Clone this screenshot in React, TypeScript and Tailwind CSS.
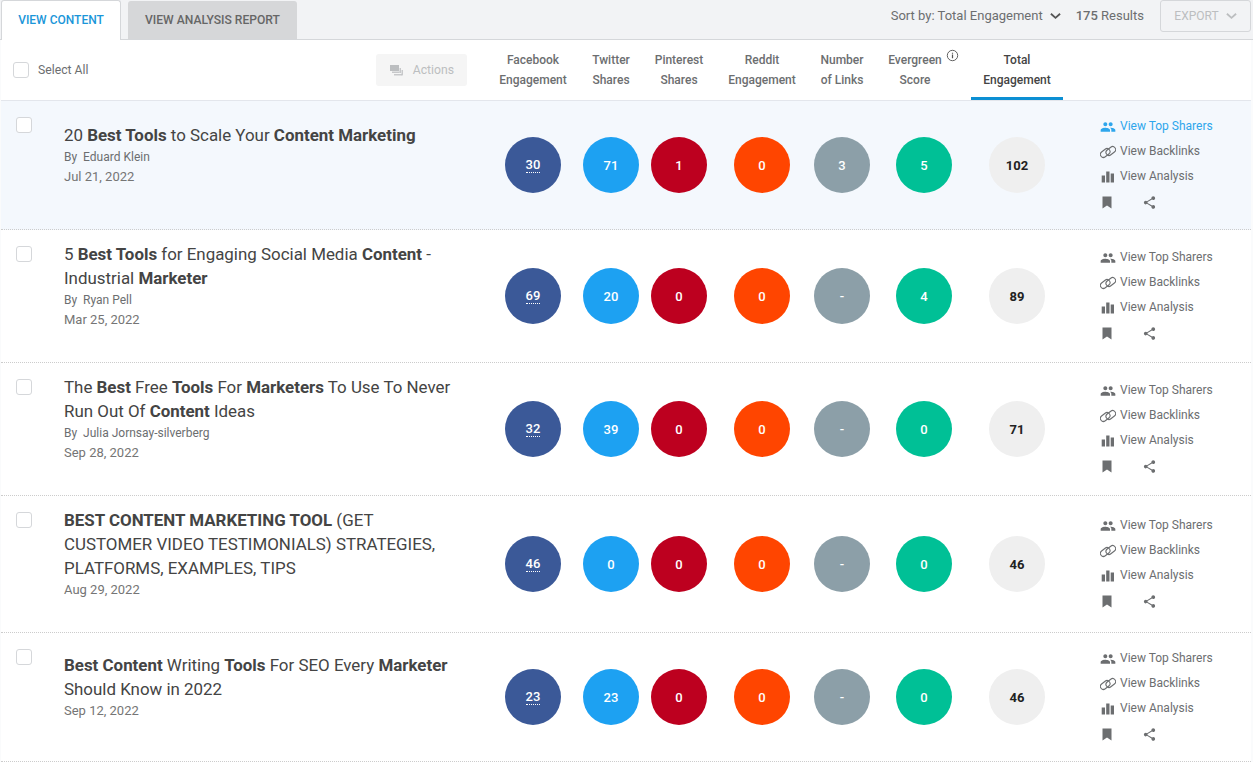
import React from "react";

const PeopleIcon = ({ className }: { className?: string }) => (
  <svg viewBox="0 0 24 24" className={className} fill="currentColor">
    <path d="M16 11c1.66 0 2.99-1.34 2.99-3S17.66 5 16 5c-1.66 0-3 1.34-3 3s1.34 3 3 3zm-8 0c1.66 0 2.99-1.34 2.99-3S9.66 5 8 5C6.34 5 5 6.34 5 8s1.34 3 3 3zm0 2c-2.33 0-7 1.17-7 3.5V19h14v-2.5c0-2.33-4.67-3.5-7-3.5zm8 0c-.29 0-.62.02-.97.05 1.16.84 1.97 1.97 1.97 3.45V19h6v-2.5c0-2.33-4.67-3.5-7-3.5z" />
  </svg>
);
const LinkIcon = ({ className }: { className?: string }) => (
  <svg viewBox="0 0 16 16" className={className} fill="none" stroke="currentColor" strokeWidth="1.1">
    <rect x="-0.05" y="6" width="10.5" height="6" rx="3" transform="rotate(-38 5.2 9)" />
    <rect x="5.55" y="4" width="10.5" height="6" rx="3" transform="rotate(-38 10.8 7)" />
  </svg>
);
const BarsIcon = ({ className }: { className?: string }) => (
  <svg viewBox="0 0 16 16" className={className} fill="currentColor">
    <rect x="1.7" y="6.5" width="3.3" height="7" />
    <rect x="6.2" y="2.5" width="3.3" height="11" />
    <rect x="10.7" y="4.5" width="3.3" height="9" />
  </svg>
);
const BookmarkIcon = ({ className }: { className?: string }) => (
  <svg viewBox="0 0 10 13" className={className} fill="currentColor">
    <path d="M0.5 0.5h9v12L5 9.6 0.5 12.5z" />
  </svg>
);
const ShareIcon = ({ className }: { className?: string }) => (
  <svg viewBox="0 0 24 24" className={className} fill="currentColor">
    <path d="M18 16.08c-.76 0-1.44.3-1.96.77L8.91 12.7c.05-.23.09-.46.09-.7s-.04-.47-.09-.7l7.05-4.11c.54.5 1.25.81 2.04.81 1.66 0 3-1.34 3-3s-1.34-3-3-3-3 1.34-3 3c0 .24.04.47.09.7L8.04 9.81C7.5 9.31 6.79 9 6 9c-1.66 0-3 1.34-3 3s1.34 3 3 3c.79 0 1.5-.31 2.04-.81l7.12 4.16c-.05.21-.08.43-.08.65 0 1.61 1.31 2.92 2.92 2.92s2.92-1.31 2.92-2.92-1.31-2.92-2.92-2.92z" />
  </svg>
);
const Chevron = ({ className }: { className?: string }) => (
  <svg viewBox="0 0 12 8" className={className} fill="none" stroke="currentColor" strokeWidth="2">
    <path d="M1 1.5l5 4.5 5-4.5" />
  </svg>
);
const ActionsIcon = ({ className }: { className?: string }) => (
  <svg viewBox="0 0 13 11" className={className} fill="currentColor">
    <rect x="0" y="0" width="9" height="6" />
    <rect x="2" y="6.6" width="7.5" height="1.2" />
    <rect x="9.6" y="3" width="1.2" height="5" />
    <rect x="4" y="9.2" width="8" height="1.2" />
    <rect x="11.6" y="5" width="1.2" height="5.4" />
  </svg>
);

const Checkbox = ({ className = "" }: { className?: string }) => (
  <span className={`block h-4 w-4 shrink-0 rounded-[3px] border border-[#d5d7da] bg-white ${className}`} />
);

type Row = {
  title: React.ReactNode;
  by?: string;
  date: string;
  nums: (string | number)[];
  h: string;
  active?: boolean;
  links: string;
  circles: string;
  text: string;
};

const rows: Row[] = [
  {
    title: (<>20 <b className="font-bold">Best Tools</b> to Scale Your <b className="font-bold">Content Marketing</b></>),
    by: "Eduard Klein",
    date: "Jul 21, 2022",
    nums: [30, 71, 1, 0, 3, 5, 102],
    h: "h-[129px]",
    active: true,
    links: "pt-[13px]",
    circles: "pt-[36px]",
    text: "pt-[22px]",
  },
  {
    title: (<>5 <b className="font-bold">Best Tools</b> for Engaging Social Media <b className="font-bold">Content</b> -<br />Industrial <b className="font-bold">Marketer</b></>),
    by: "Ryan Pell",
    date: "Mar 25, 2022",
    nums: [69, 20, 0, 0, "-", 4, 89],
    h: "h-[133px]",
    links: "pt-[15px]",
    circles: "pt-[38px]",
    text: "pt-[12px]",
  },
  {
    title: (<>The <b className="font-bold">Best</b> Free <b className="font-bold">Tools</b> For <b className="font-bold">Marketers</b> To Use To Never<br />Run Out Of <b className="font-bold">Content</b> Ideas</>),
    by: "Julia Jornsay-silverberg",
    date: "Sep 28, 2022",
    nums: [32, 39, 0, 0, "-", 0, 71],
    h: "h-[133px]",
    links: "pt-[15px]",
    circles: "pt-[38px]",
    text: "pt-[12px]",
  },
  {
    title: (<><b className="font-bold">BEST CONTENT MARKETING TOOL</b> (GET<br />CUSTOMER VIDEO TESTIMONIALS) STRATEGIES,<br />PLATFORMS, EXAMPLES, TIPS</>),
    date: "Aug 29, 2022",
    nums: [46, 0, 0, 0, "-", 0, 46],
    h: "h-[137px]",
    links: "pt-[17px]",
    circles: "pt-[40px]",
    text: "pt-[12px]",
  },
  {
    title: (<><b className="font-bold">Best Content</b> Writing <b className="font-bold">Tools</b> For SEO Every <b className="font-bold">Marketer</b><br />Should Know in 2022</>),
    date: "Sep 12, 2022",
    nums: [23, 23, 0, 0, "-", 0, 46],
    h: "h-[129px]",
    links: "pt-[13px]",
    circles: "pt-[36px]",
    text: "pt-[20px]",
  },
];

const heads = [
  { a: "Facebook", b: "Engagement", w: "w-[78px]" },
  { a: "Twitter", b: "Shares", w: "w-[78px]" },
  { a: "Pinterest", b: "Shares", w: "w-[58px]" },
  { a: "Reddit", b: "Engagement", w: "w-[108px]" },
  { a: "Number", b: "of Links", w: "w-[52px]" },
];

const Circles = ({ nums }: { nums: (string | number)[] }) => (
  <div className="flex text-[13px] font-medium leading-none text-white">
    <div className="flex h-14 w-14 items-center justify-center rounded-full bg-[#3b5998]">
      <span className="border-b border-dotted border-white pb-px">{nums[0]}</span>
    </div>
    <div className="ml-[22px] flex h-14 w-14 items-center justify-center rounded-full bg-[#1da1f2]">{nums[1]}</div>
    <div className="ml-[12px] flex h-14 w-14 items-center justify-center rounded-full bg-[#bd001f]">{nums[2]}</div>
    <div className="ml-[27px] flex h-14 w-14 items-center justify-center rounded-full bg-[#ff4500]">{nums[3]}</div>
    <div className="ml-[24px] flex h-14 w-14 items-center justify-center rounded-full bg-[#8c9fa8]">{nums[4]}</div>
    <div className="ml-[26px] flex h-14 w-14 items-center justify-center rounded-full bg-[#00c096]">{nums[5]}</div>
    <div className="ml-[37px] flex h-14 w-14 items-center justify-center rounded-full bg-[#efefef] font-bold text-[#222222]">{nums[6]}</div>
  </div>
);

export default function App() {
  return (
    <div className="h-[762px] w-[1253px] overflow-hidden bg-[#fafbfc] font-['Roboto',sans-serif] text-[#6c6e70]">
      <div className="flex h-[40px] items-end border-b border-[#d5d7da] bg-[#f2f3f5]">
        <div className="z-10 ml-px -mb-px flex h-[40px] w-[120px] items-center justify-center rounded-t-[3px] border border-b-0 border-[#d5d7da] bg-white pb-[1px] text-[12px] font-medium text-[#1a96d9]">
          VIEW CONTENT
        </div>
        <div className="ml-[7px] flex h-[38px] w-[169px] items-center justify-center rounded-t-[3px] bg-[#d6d7d9] text-[12.1px] font-medium text-[#666666]">
          VIEW ANALYSIS REPORT
        </div>
        <div className="flex h-[39px] flex-1 items-center justify-end pb-[8px] text-[13px]">
          <span className="mr-[7px]">Sort by: Total Engagement</span>
          <Chevron className="mr-[15px] h-[8px] w-[11px] text-[#555555]" />
          <span className="mr-[16px]"><b className="font-medium">175</b> Results</span>
        </div>
        <div className="mb-[7px] mr-[2px] flex h-[32px] w-[91px] items-center justify-center gap-[7px] rounded-[3px] border border-[#d5d7da] text-[12px] text-[#bcbec0]">
          EXPORT
          <Chevron className="h-[8px] w-[11px]" />
        </div>
      </div>

      <div className="ml-px mr-[2px] flex h-[61px] border-b border-[#e3e6ec] bg-white">
        <div className="flex w-[493px] items-center pl-[12px]">
          <Checkbox />
          <span className="ml-[9px] text-[12.2px]">Select All</span>
          <div className="ml-[288px] flex h-[32px] w-[91px] items-center justify-center gap-[10px] rounded-[3px] bg-[#f5f5f5] text-[12.2px] text-[#bcbec0]">
            <ActionsIcon className="h-[11px] w-[13px]" />
            Actions
          </div>
        </div>
        {heads.map((h) => (
          <div key={h.a} className={`${h.w} flex flex-col items-center pt-[10px] text-[12px] font-medium leading-[20px] whitespace-nowrap`}>
            <span>{h.a}</span>
            <span>{h.b}</span>
          </div>
        ))}
        <div className="relative flex w-[94px] flex-col items-center pt-[10px] text-[12px] font-medium leading-[20px]">
          <span>Evergreen</span>
          <span>Score</span>
          <svg viewBox="0 0 14 14" className="absolute left-[78px] top-[9px] h-[13px] w-[13px]" fill="none" stroke="#555555" strokeWidth="1">
            <circle cx="7" cy="7" r="5.6" />
            <path d="M7 6v4M7 4v1.2" strokeWidth="1.3" />
          </svg>
        </div>
        <div className="ml-[9px] flex h-[60px] w-[92px] flex-col items-center border-b-[3px] border-[#0c8fd3] pt-[10px] text-[12px] font-medium leading-[20px] text-[#444444]">
          <span>Total</span>
          <span>Engagement</span>
        </div>
      </div>

      {rows.map((r, i) => (
        <div key={i} className={`ml-px mr-[2px] flex ${r.h} border-b border-dotted border-[#cccccc] ${r.active ? "bg-[#f4f8fd]" : "bg-white"}`}>
          <div className="flex w-[504px] pl-[15px]">
            <Checkbox className="mt-[16px]" />
            <div className={`ml-[32px] ${r.text}`}>
              <div className="text-[16.92px] leading-[24px] whitespace-nowrap text-[#444444]">{r.title}</div>
              {r.by && <div className="mt-[1px] text-[12px] leading-[18px]">By&nbsp; {r.by}</div>}
              <div className={`${r.by ? "mt-[2px]" : "mt-[1px]"} text-[13px] leading-[18px] text-[#757575]`}>{r.date}</div>
            </div>
          </div>
          <div className={r.circles}>
            <Circles nums={r.nums} />
          </div>
          <div className={`ml-[55px] ${r.links} text-[12px] leading-[25px]`}>
            <div className={`flex items-center ${r.active ? "text-[#2ea6ec]" : ""}`}>
              <PeopleIcon className="mr-[4px] h-[16px] w-[16px]" />View Top Sharers
            </div>
            <div className="flex items-center">
              <LinkIcon className="mr-[4px] h-[16px] w-[16px]" />View Backlinks
            </div>
            <div className="flex items-center">
              <BarsIcon className="mr-[4px] h-[16px] w-[16px]" />View Analysis
            </div>
            <div className="mt-[6px] flex items-center">
              <BookmarkIcon className="ml-[2px] h-[13px] w-[10px]" />
              <ShareIcon className="ml-[30px] h-[15px] w-[15px]" />
            </div>
          </div>
        </div>
      ))}
    </div>
  );
}
